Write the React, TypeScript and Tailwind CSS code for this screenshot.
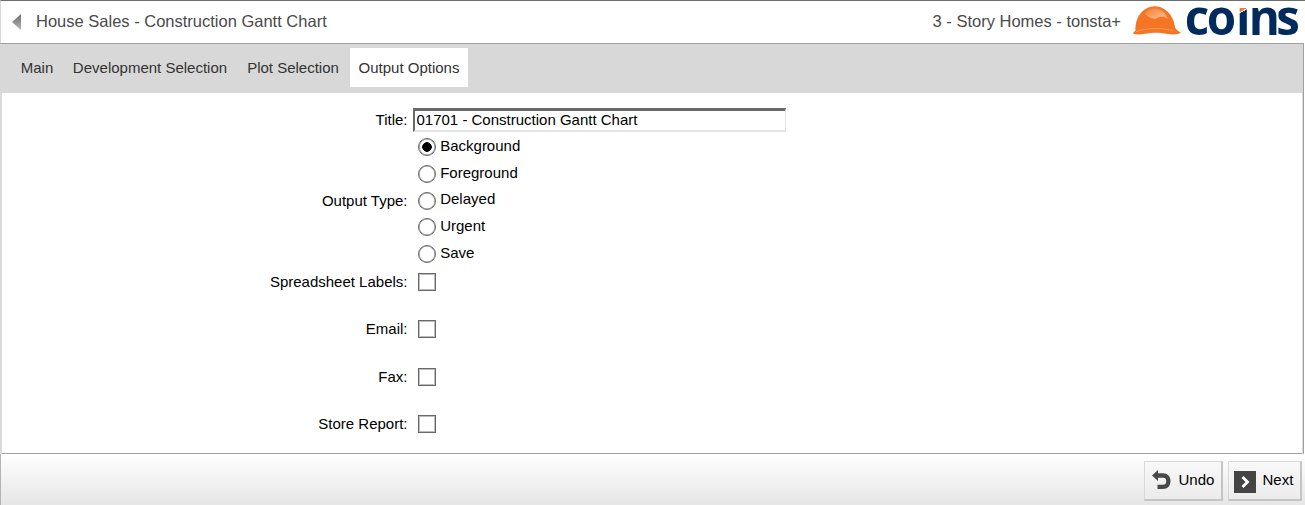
import React, { useState } from "react";

const tabs = [
  { label: "Main", box: "ml-[11px] w-[52px]" },
  { label: "Development Selection", box: "w-[174px]" },
  { label: "Plot Selection", box: "w-[112px]" },
  { label: "Output Options", box: "ml-px w-[118px]" },
];
const outputTypes = ["Background", "Foreground", "Delayed", "Urgent", "Save"];

function Logo() {
  return (
    <svg className="block h-[42px] w-[175px] overflow-visible" viewBox="1130 1 175 42" role="img" aria-label="coins">
      <defs>
        <linearGradient id="shine" x1="0" y1="0" x2="1" y2="1">
          <stop offset="0" stopColor="#f67c30" />
          <stop offset="0.7" stopColor="#ffb07a" />
          <stop offset="1" stopColor="#fa9350" />
        </linearGradient>
        <linearGradient id="stem" gradientUnits="userSpaceOnUse" x1="1274.300" y1="5.500" x2="1282.300" y2="20.500">
          <stop offset="0.44" stopColor="#f5762a" />
          <stop offset="0.45" stopColor="#fff" />
          <stop offset="0.5" stopColor="#fff" />
          <stop offset="0.51" stopColor="#002b5c" />
        </linearGradient>
      </defs>
      <path
        d="M1133 33.500C1133.500 32 1134.500 31.500 1135.500 30.500C1135 18 1142 7.500 1153 6.500C1157 6 1160 6.800 1163 8.500C1170 12 1174 19 1175 27.500C1176.500 30 1178.500 31.500 1181 32.500C1177 35 1172 34.500 1168 34C1158 32 1152 32.500 1145 33.800C1140 34.800 1136 34.800 1133 33.500Z"
        fill="#f47524"
      />
      <path d="M1147 11C1150 8.500 1155 8 1158 9C1163 10.500 1166 14 1168 19C1163 16 1159 16 1156 19C1152 19 1148 17 1145 14Z" fill="url(#shine)" />
      <path d="M1136 31.500C1145 28.500 1158 27 1173 30.500" fill="none" stroke="#fa9a5c" strokeWidth="0.9" />
      <text
        transform="scale(0.97 1)"
        x="1221.300 1244.100 1274.200 1287.400 1315.800"
        y="34.500"
        fontFamily="Open Sans, sans-serif"
        fontSize="49"
        fontWeight="700"
        fill="#002b5c"
      >
        co<tspan fill="url(#stem)">ı</tspan>ns
      </text>
    </svg>
  );
}

function Check({ label }: { label: string }) {
  const [on, setOn] = useState(false);
  return (
    <label className="flex h-[47.400px] items-start">
      <span className="w-[407.500px] text-right leading-[18px]">{label}:</span>
      <input
        type="checkbox"
        checked={on}
        onChange={() => setOn(!on)}
        className="ml-[10.500px] size-[18px] appearance-none border border-[#686868] bg-white shadow-[inset_0_0_0_1px_#bcbcbc] checked:bg-[#707070]"
      />
    </label>
  );
}

function Button({ children, width }: { children: React.ReactNode; width: string }) {
  return (
    <button
      className={`flex h-[40px] items-center border-t border-r-2 border-b-2 border-l border-t-[#d9d9d9] border-r-[#c4c4c4] border-b-[#c4c4c4] border-l-[#d9d9d9] bg-linear-to-b from-[#f8f8f8] to-[#ececec] pb-px ${width}`}
    >
      {children}
    </button>
  );
}

export default function App() {
  const [type, setType] = useState("Background");
  const [title, setTitle] = useState("01701 - Construction Gantt Chart");
  return (
    <div className="flex h-[505px] w-[1305px] flex-col overflow-hidden bg-white font-['Liberation_Sans',Arial,sans-serif] text-[15px] text-black">
      <header className="flex h-[43px] items-center border-t border-l border-t-[#6d6d6d] border-l-[#d9d9d9] text-[16.500px] text-[#4a4a4a]">
        <svg className="mb-px ml-[11px] h-4 w-[9px]" viewBox="0 0 9 16">
          <defs>
            <linearGradient id="arrow" x1="0" y1="0" x2="0" y2="1">
              <stop offset="0" stopColor="#6c6c6c" />
              <stop offset="1" stopColor="#b4b4b4" />
            </linearGradient>
          </defs>
          <path d="M9 0V16L0 8Z" fill="url(#arrow)" />
        </svg>
        <h1 className="mb-[2px] ml-[15px] whitespace-nowrap">House Sales - Construction Gantt Chart</h1>
        <span className="mr-[9px] mb-[2px] ml-auto whitespace-nowrap">3 - Story Homes - tonsta+</span>
        <Logo />
      </header>

      <div className="mr-px flex h-[411px] flex-col border-t border-r border-b border-[#a0a0a0]">
        <nav className="flex h-[49px] shrink-0 items-start bg-[#d8d8d8] pt-1 text-[#333]">
          {tabs.map((t, i) => (
            <button
              key={t.label}
              className={`h-[39px] shrink-0 whitespace-nowrap pt-px text-center ${t.box} ${i === 3 ? "bg-white" : ""}`}
            >
              {t.label}
            </button>
          ))}
        </nav>
        <main className="flex-1 border-r border-b border-l-2 border-[#dadada] pt-[15px]">
          <div className="-ml-0.5">
            <label className="flex h-6 items-center">
              <span className="w-[407.500px] text-right">Title:</span>
              <input
                value={title}
                onChange={(e) => setTitle(e.target.value)}
                className="ml-[5.500px] h-6 w-[372.500px] border-t-[3px] border-r border-b-2 border-l-2 border-t-[#696969] border-r-[#e3e3e3] border-b-[#e3e3e3] border-l-[#696969] pb-[2px] pl-[1.500px] outline-none"
              />
            </label>
            <div className="flex h-[141px] pt-[3px]">
              <span className="w-[407.500px] pt-[47px] text-right">
                <span className="block h-[38px] leading-[38px]">Output Type:</span>
              </span>
              <div className="ml-[10.500px]">
                {outputTypes.map((o) => (
                  <label key={o} className="flex h-[26.650px] items-start">
                    <input
                      type="radio"
                      name="output"
                      checked={type === o}
                      onChange={() => setType(o)}
                      className="mt-[3.400px] size-[18px] appearance-none rounded-full border border-[#686868] bg-white bg-[radial-gradient(circle,#000_4.500px,transparent_5px)] shadow-[inset_0_0_0_0.6px_#8c8c8c] not-checked:bg-none"
                    />
                    <span className="ml-[4.200px] leading-[22px]">{o}</span>
                  </label>
                ))}
              </div>
            </div>
            <Check label="Spreadsheet Labels" />
            <Check label="Email" />
            <Check label="Fax" />
            <Check label="Store Report" />
          </div>
        </main>
      </div>

      <footer className="flex h-[51px] items-start justify-end gap-[5px] border-l border-[#b4b4b4] bg-linear-to-b from-white to-[#e6e6e6] pt-[7px] pr-[3px]">
        <Button width="w-[79px]">
          <svg className="ml-[7px] h-5 w-[19px]" viewBox="0 0 19 20">
            <path d="M0 5.500L6 0V3.300H11C15.500 3.300 18.500 6.500 18.500 11C18.500 16 15.500 19 11 19H5.500V14.800H11C13.200 14.800 14.200 13.500 14.200 11.200C14.200 8.800 13.200 7.800 11 7.800H6V11Z" fill="#484848" />
          </svg>
          <span className="ml-[7.500px]">Undo</span>
        </Button>
        <Button width="w-[74px]">
          <svg className="mt-[3px] ml-[5px] size-[22px]" viewBox="0 0 22 22">
            <path d="M0 0H22V22H0Z" fill="#444" />
            <path d="M8.500 6L13.500 11L8.500 16" fill="none" stroke="#fff" strokeWidth="2.800" />
          </svg>
          <span className="ml-[6.500px]">Next</span>
        </Button>
      </footer>
    </div>
  );
}
